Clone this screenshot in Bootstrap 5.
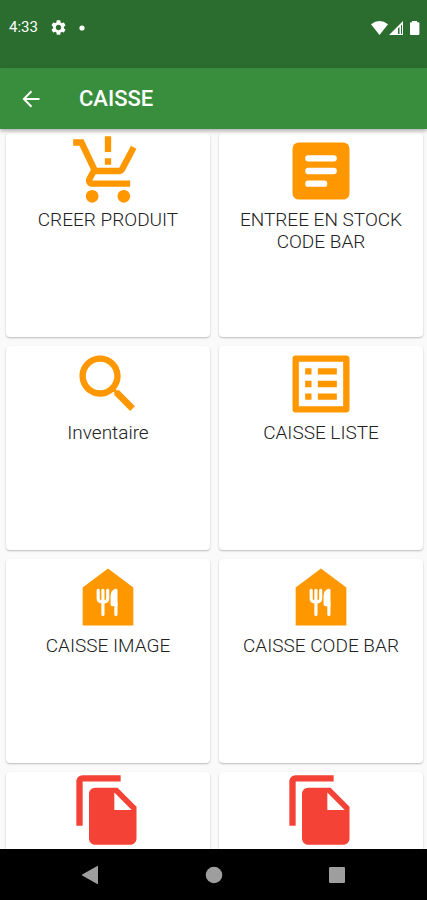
<!DOCTYPE html>
<html lang="fr">
<head>
<meta charset="utf-8">
<meta name="viewport" content="width=device-width, initial-scale=1">
<title>Caisse</title>
<link href="https://cdn.jsdelivr.net/npm/bootstrap@5.3.0/dist/css/bootstrap.min.css" rel="stylesheet">
<style>
body { font-family: Roboto, "Liberation Sans", sans-serif; background: #fafafa; }
.status-bar { background: #2b6d2f; height: 68px; padding: 0 7px 13px 9px; gap: 13px; font-size: 15px; }
.app-bar { background: #388e3c; height: 61px; padding: 0 19px; gap: 36px; box-shadow: 0 2px 4px rgba(0,0,0,.3); z-index: 1; }
.app-title { font-size: 22px; font-weight: 500; line-height: 24px; }
.tile-area { min-height: 0; padding: 4px 4px 0 6px; }
.tile-grid { display: grid; grid-template-columns: repeat(2, minmax(0, 1fr)); gap: 9px; }
.tile { aspect-ratio: 1; border-radius: 4px; box-shadow: 0 1px 2px rgba(0,0,0,.26); color: #212121; font-size: 19px; font-weight: 300; line-height: 22px; padding: 0 16px; }
.tile svg { width: 76px; height: 76px; fill: #ff9800; }
.tile svg.file-icon { fill: #f44336; }
.sys-nav { background: #000; height: 51px; padding: 0 28px; }
.sys-nav svg { fill: #9e9e9e; }
</style>
<script src="https://cdn.jsdelivr.net/npm/bootstrap@5.3.0/dist/js/bootstrap.bundle.min.js"></script>
</head>
<body class="vh-100 d-flex flex-column overflow-hidden">
<div class="status-bar d-flex align-items-center flex-shrink-0 text-white">
  <span>4:33</span>
  <svg width="15" height="15" viewBox="2 2 20 20" fill="#fff" aria-hidden="true"><path d="M19.14 12.94c.04-.3.06-.61.06-.94 0-.32-.02-.64-.07-.94l2.03-1.58c.18-.14.23-.41.12-.61l-1.92-3.32c-.12-.22-.37-.29-.59-.22l-2.39.96c-.5-.38-1.03-.7-1.62-.94l-.36-2.54c-.04-.24-.24-.41-.48-.41h-3.84c-.24 0-.43.17-.47.41l-.36 2.54c-.59.24-1.13.57-1.62.94l-2.39-.96c-.22-.08-.47 0-.59.22L2.74 8.87c-.12.21-.08.47.12.61l2.03 1.58c-.05.3-.09.63-.09.94s.02.64.07.94l-2.03 1.58c-.18.14-.23.41-.12.61l1.92 3.32c.12.22.37.29.59.22l2.39-.96c.5.38 1.03.7 1.62.94l.36 2.54c.05.24.24.41.48.41h3.84c.24 0 .44-.17.47-.41l.36-2.54c.59-.24 1.13-.56 1.62-.94l2.39.96c.22.08.47 0 .59-.22l1.92-3.32c.12-.22.07-.47-.12-.61l-2.01-1.58zM12 15.6c-1.98 0-3.6-1.62-3.6-3.6s1.62-3.6 3.6-3.6 3.6 1.62 3.6 3.6-1.62 3.6-3.6 3.6z"/></svg>
  <svg width="6" height="6" viewBox="0 0 6 6" fill="#fff" aria-hidden="true"><circle cx="3" cy="3" r="2.6"/></svg>
  <svg class="ms-auto" width="50" height="16" viewBox="0 0 50 16" fill="#fff" aria-hidden="true">
    <path d="M1 4.200Q9.500-2 18 4.200L9.500 15z"/>
    <path fill-rule="evenodd" d="M19 15L33 1v14zM28 8.500V14h1.500V7zM31 5.500V14h1V4.500z"/>
    <path d="M42 1h5v1.200h1.500q.9 0 .9.900v11q0 .9-.9.900h-7.600q-.9 0-.9-.9v-11q0-.9.900-.9H42z"/>
  </svg>
</div>
<header class="app-bar d-flex align-items-center flex-shrink-0 position-relative text-white">
  <button type="button" class="btn p-0 border-0 d-flex" aria-label="Retour">
    <svg width="24" height="24" viewBox="0 0 24 24" fill="#fff"><path d="M20.500 11H7.200l6-6L11.800 3.500 3.500 12l8.300 8.500 1.400-1.500-6-6h13.300z"/></svg>
  </button>
  <h1 class="app-title m-0">CAISSE</h1>
</header>
<main class="tile-area flex-grow-1 overflow-hidden">
  <div class="tile-grid">
    <a href="#" class="tile bg-white d-flex flex-column align-items-center text-center text-decoration-none">
      <svg viewBox="0 0 24 24" aria-hidden="true"><path d="M13 10h-2V8h2zM13 6h-2V1h2zM7 18c-1.100 0-1.990.9-1.990 2S5.900 22 7 22s2-.9 2-2-.9-2-2-2zM17 18c-1.100 0-1.990.9-1.990 2s.89 2 1.990 2 2-.9 2-2-.9-2-2-2zM8.100 13h7.450c.75 0 1.410-.41 1.750-1.030L21 4.960 19.250 4l-3.700 7H8.530L4.270 2H1v2h2l3.600 7.590-1.350 2.440C4.520 15.370 5.480 17 7 17h12v-2H7z"/></svg>
      <span>CREER PRODUIT</span>
    </a>
    <a href="#" class="tile bg-white d-flex flex-column align-items-center text-center text-decoration-none">
      <svg viewBox="0 0 24 24" aria-hidden="true"><rect x="3" y="3" width="18" height="18" rx="2"/><path d="M8 8h8M8 12h8M8 16h5" stroke="#fff" stroke-width="2" stroke-linecap="round"/></svg>
      <span>ENTREE EN STOCK CODE BAR</span>
    </a>
    <a href="#" class="tile bg-white d-flex flex-column align-items-center text-center text-decoration-none">
      <svg viewBox="0 0 24 24" aria-hidden="true"><path d="M15.500 14h-.79l-.28-.27C15.410 12.590 16 11.110 16 9.500 16 5.910 13.090 3 9.500 3S3 5.910 3 9.500 5.910 16 9.500 16c1.610 0 3.090-.59 4.230-1.570l.27.28v.79l5 4.990L20.490 19zM9.500 14C7.010 14 5 11.990 5 9.500S7.010 5 9.500 5 14 7.010 14 9.500 11.990 14 9.500 14z"/></svg>
      <span>Inventaire</span>
    </a>
    <a href="#" class="tile bg-white d-flex flex-column align-items-center text-center text-decoration-none">
      <svg viewBox="0 0 24 24" aria-hidden="true"><path d="M19 5v14H5V5h14m1.100-2H3.900c-.5 0-.9.4-.9.9v16.200c0 .4.4.9.9.9h16.200c.4 0 .9-.5.9-.9V3.900c0-.5-.5-.9-.9-.9zM11 7h6v2h-6zM11 11h6v2h-6zM11 15h6v2h-6zM7 7h2v2H7zM7 11h2v2H7zM7 15h2v2H7z"/></svg>
      <span>CAISSE LISTE</span>
    </a>
    <a href="#" class="tile bg-white d-flex flex-column align-items-center text-center text-decoration-none">
      <svg viewBox="0 0 24 24" aria-hidden="true"><path d="M12 3L4 9v12h16V9z"/><path d="M8.900 9.900v2.600q0 1.100 1.500 1.100t1.500-1.100V9.900M10.400 9.900v7.600M14.500 14v3.500" fill="none" stroke="#fff" stroke-linecap="round" stroke-linejoin="round"/><path fill="#fff" d="M15 9.900v5h-1.500q-.7 0-.7-.7v-2.500q0-1.800 1.600-2.300.6-.1.600.5z"/></svg>
      <span>CAISSE IMAGE</span>
    </a>
    <a href="#" class="tile bg-white d-flex flex-column align-items-center text-center text-decoration-none">
      <svg viewBox="0 0 24 24" aria-hidden="true"><path d="M12 3L4 9v12h16V9z"/><path d="M8.900 9.900v2.600q0 1.100 1.500 1.100t1.500-1.100V9.900M10.400 9.900v7.600M14.500 14v3.500" fill="none" stroke="#fff" stroke-linecap="round" stroke-linejoin="round"/><path fill="#fff" d="M15 9.900v5h-1.500q-.7 0-.7-.7v-2.500q0-1.800 1.600-2.300.6-.1.600.5z"/></svg>
      <span>CAISSE CODE BAR</span>
    </a>
    <a href="#" class="tile bg-white d-flex flex-column align-items-center text-center text-decoration-none" aria-label="Document">
      <svg class="file-icon" viewBox="0 0 24 24" aria-hidden="true"><path d="M16 1H4c-1.100 0-2 .9-2 2v14h2V3h12zM15 5l6 6v10c0 1.100-.9 2-2 2H7.990C6.890 23 6 22.100 6 21V7c0-1.100.89-2 1.990-2zM14 12h5.500L14 6.500z"/></svg>
    </a>
    <a href="#" class="tile bg-white d-flex flex-column align-items-center text-center text-decoration-none" aria-label="Document">
      <svg class="file-icon" viewBox="0 0 24 24" aria-hidden="true"><path d="M16 1H4c-1.100 0-2 .9-2 2v14h2V3h12zM15 5l6 6v10c0 1.100-.9 2-2 2H7.990C6.890 23 6 22.100 6 21V7c0-1.100.89-2 1.990-2zM14 12h5.500L14 6.500z"/></svg>
    </a>
  </div>
</main>
<nav class="sys-nav d-flex align-items-center flex-shrink-0" aria-label="Navigation">
  <button type="button" class="btn p-0 border-0 flex-fill d-flex justify-content-center" aria-label="Précédent"><svg width="18" height="20" viewBox="0 0 18 20"><path d="M17 1.500v17q0 .8-.8.400L1.200 10.600q-.8-.6 0-1.200l15-8.300q.8-.4.800.4z"/></svg></button>
  <button type="button" class="btn p-0 border-0 flex-fill d-flex justify-content-center" aria-label="Accueil"><svg width="18" height="18" viewBox="0 0 18 18"><circle cx="9" cy="9" r="8.300"/></svg></button>
  <button type="button" class="btn p-0 border-0 flex-fill d-flex justify-content-center" aria-label="Applications"><svg width="18" height="18" viewBox="0 0 18 18"><rect x="1" y="1" width="16" height="16" rx="1"/></svg></button>
</nav>
</body>
</html>
